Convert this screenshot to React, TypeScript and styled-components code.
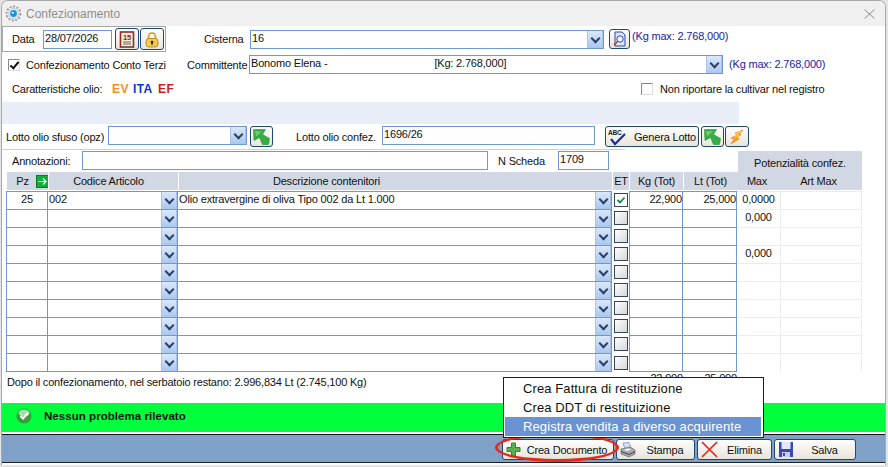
import React from "react";
import styled, { createGlobalStyle } from "styled-components";

const GlobalStyle = createGlobalStyle`
  html, body { margin: 0; padding: 0; background: #e4e4e4; }
  body { width: 888px; height: 467px; overflow: hidden; font-family: "Liberation Sans", Arial, sans-serif; font-size: 11px; letter-spacing: -0.18px; color: #111; }
`;

const rows = [
  { pz: "25", code: "002", desc: "Olio extravergine di oliva Tipo 002 da Lt 1.000", et: true, kg: "22,900", lt: "25,000", max: "0,0000" },
  { max: "0,000" },
  {},
  { max: "0,000" },
  {},
  {},
  {},
  {},
  {},
  {},
] as { pz?: string; code?: string; desc?: string; et?: boolean; kg?: string; lt?: string; max?: string }[];

const COLS = "42px 130px 434px 17px 54px 54px 44px 81px";

export default function App() {
  return (
    <>
      <GlobalStyle />
      <Window>
        <TitleBar>
          <GearIcon />
          <Title>Confezionamento</Title>
          <CloseButton>
            <svg width="11" height="10" viewBox="0 0 11 10">
              <path d="M.5.5l10 9M10.500.5l-10 9" stroke="#8a8a8a" strokeWidth="1" fill="none" />
            </svg>
          </CloseButton>
        </TitleBar>
        <Body>
          <TopRow>
            <DateBox>
              <Label>Data</Label>
              <Input $w={69} $h={19}>28/07/2026</Input>
              <IconButton $w={24} $h={22}><CalendarIcon /></IconButton>
              <IconButton $w={24} $h={22}><LockIcon /></IconButton>
            </DateBox>
            <Label $ml={38} $w={46}>Cisterna</Label>
            <Combo $w={354} $h={19}>16</Combo>
            <IconButton $w={21} $h={20} $ml={5}><DocSearchIcon /></IconButton>
            <Note $ml={2} $up={6}>(Kg max: 2.768,000)</Note>
          </TopRow>
          <Row $h={21} $mt={2}>
            <CheckBox $ml={6} $checked />
            <Label $ml={6} $w={161}>Confezionamento Conto Terzi</Label>
            <Label $w={62}>Committente</Label>
            <Combo $w={474} $h={19}>
              Bonomo Elena -
              <Spacer />
              [Kg: 2.768,000]
            </Combo>
            <Note $ml={6} $up={2}>(Kg max: 2.768,000)</Note>
          </Row>
          <Row $h={18} $mt={5}>
            <Label $ml={10} $w={100}>Caratteristiche olio:</Label>
            <Tag $color="#ff8a1e" $w={21}>EV</Tag>
            <Tag $color="#0a34e0" $w={25}>ITA</Tag>
            <Tag $color="#c81e1e" $w={20}>EF</Tag>
            <CheckBox $ml={463} />
            <Label $ml={7}>Non riportare la cultivar nel registro</Label>
          </Row>
          <Band />
          <Row $h={21} $mt={2}>
            <Label $ml={4} $w={102}>Lotto olio sfuso (opz)</Label>
            <Combo $w={139} $h={19} $lift />
            <IconButton $w={23} $h={21} $ml={3}><GreenArrowIcon /></IconButton>
            <Label $ml={23} $w={86}>Lotto olio confez.</Label>
            <Input $w={213} $h={19} $lift>1696/26</Input>
            <IconButton $w={94} $h={21} $ml={10}>
              <AbcIcon />
              <ButtonText $pl={6}>Genera Lotto</ButtonText>
            </IconButton>
            <IconButton $w={23} $h={21} $ml={2}><GreenArrowIcon /></IconButton>
            <IconButton $w={24} $h={21} $ml={1}><BoltIcon /></IconButton>
          </Row>
          <Divider />
          <Row $h={19} $mt={1}>
            <Label $ml={10} $w={70}>Annotazioni:</Label>
            <Input $w={406} $h={19} />
            <Label $ml={10} $w={60}>N Scheda</Label>
            <Input $w={51} $h={19}>1709</Input>
            <PotentialHead>Potenzialità confez.</PotentialHead>
          </Row>
          <Grid>
            <Head $pl={10}>
              Pz
              <ArrowBadge>
                <svg width="11" height="11" viewBox="0 0 11 11">
                  <path d="M1.500 5.500h7.500M6 2.500l3 3-3 3" stroke="#fff" strokeWidth="1.200" fill="none" />
                </svg>
              </ArrowBadge>
            </Head>
            <Head $pr={10}>Codice Articolo</Head>
            <Head $pr={138}>Descrizione contenitori</Head>
            <Head>ET</Head>
            <Head>Kg (Tot)</Head>
            <Head>Lt (Tot)</Head>
            <Head $joined $pr={4}>Max</Head>
            <Head $joined $pr={6}>Art Max</Head>
            {rows.map((r, i) => {
              const last = i === rows.length - 1;
              return (
                <React.Fragment key={i}>
                  <Cell $align="center" $first $last={last}>{r.pz}</Cell>
                  <Cell $pad $last={last}>
                    {r.code}
                    <DropButton />
                  </Cell>
                  <Cell $pad $last={last}>
                    {r.desc}
                    <DropButton />
                  </Cell>
                  <EtCell>
                    <SmallCheck $checked={r.et}>
                      {r.et && (
                        <svg width="10" height="10" viewBox="0 0 10 10">
                          <path d="M1.500 5l2.500 2.500L8.500 2.500" stroke="#0b8a3a" strokeWidth="1.800" fill="none" />
                        </svg>
                      )}
                    </SmallCheck>
                  </EtCell>
                  <Cell $align="right" $first $last={last}>{r.kg}</Cell>
                  <Cell $align="right" $last={last}>{r.lt}</Cell>
                  <SideCell>{r.max}</SideCell>
                  <SideCell />
                </React.Fragment>
              );
            })}
          </Grid>
          <Totals>
            <span />
            <span />
            <span />
            <span />
            <TotalValue>22,900</TotalValue>
            <TotalValue>25,000</TotalValue>
          </Totals>
          <Remaining>Dopo il confezionamento, nel serbatoio restano: 2.996,834 Lt (2.745,100 Kg)</Remaining>
          <StatusBar>
            <OkIcon />
            <StatusText>Nessun problema rilevato</StatusText>
          </StatusBar>
        </Body>
        <Footer>
          <FootButton $w={112}>
            <PlusIcon />
            <FootLabel>Crea Documento</FootLabel>
          </FootButton>
          <FootButton $w={79}>
            <PrinterIcon />
            <FootLabel>Stampa</FootLabel>
          </FootButton>
          <FootButton $w={75}>
            <CrossIcon />
            <FootLabel>Elimina</FootLabel>
          </FootButton>
          <FootButton $w={82}>
            <SaveIcon />
            <FootLabel>Salva</FootLabel>
          </FootButton>
          <RedRing />
          <Menu>
            <MenuItem>Crea Fattura di restituzione</MenuItem>
            <MenuItem>Crea DDT di restituizione</MenuItem>
            <MenuItem $active>Registra vendita a diverso acquirente</MenuItem>
          </Menu>
        </Footer>
      </Window>
    </>
  );
}

function Combo({ $w, $h, $lift, children }: { $w: number; $h: number; $lift?: boolean; children?: React.ReactNode }) {
  return (
    <ComboBox $w={$w} $h={$h} $lift={$lift}>
      <ComboText>{children}</ComboText>
      <DropButton />
    </ComboBox>
  );
}

function GearIcon() {
  return (
    <svg width="17" height="17" viewBox="0 0 17 17">
      <circle cx="8.500" cy="8.500" r="7" fill="none" stroke="#9a9a9a" strokeWidth="1.800" strokeDasharray="2 1.600" />
      <circle cx="8.500" cy="8.500" r="5" fill="#eef2f6" stroke="#a8a8a8" strokeWidth=".6" />
      <circle cx="8.500" cy="8.500" r="3.400" fill="#1590e8" />
      <circle cx="7.800" cy="7.800" r="1.200" fill="#bfe6ff" />
    </svg>
  );
}

function CalendarIcon() {
  return (
    <svg width="16" height="17" viewBox="0 0 16 17">
      <rect x="1.500" y="1" width="13" height="15" fill="#f2ecd8" stroke="#8c2c2c" strokeWidth="1.600" />
      <path d="M4 11h8M4 13h8" stroke="#666" />
      <text x="8" y="9" fontSize="7.500" fontWeight="700" textAnchor="middle" fill="#a01818" fontFamily="Liberation Sans">15</text>
    </svg>
  );
}

function LockIcon() {
  return (
    <svg width="16" height="17" viewBox="0 0 16 17">
      <path d="M4.500 8V5.500a3.500 3.500 0 017 0V8" fill="none" stroke="#c89a30" strokeWidth="1.600" />
      <rect x="2" y="7.500" width="12" height="8.500" rx="3" fill="#f5c94e" stroke="#c28f22" />
      <circle cx="8" cy="11" r="1.300" fill="#222" />
      <path d="M8 11v3" stroke="#222" strokeWidth="1.200" />
    </svg>
  );
}

function DocSearchIcon() {
  return (
    <svg width="16" height="16" viewBox="0 0 16 16">
      <path d="M3 1h7l3 3v11H3z" fill="#dfe8fb" stroke="#2e46b0" />
      <circle cx="8" cy="8" r="3.200" fill="#f4f8ff" stroke="#2e46b0" />
      <path d="M5.500 10.500L2 14" stroke="#b8401c" strokeWidth="1.600" />
    </svg>
  );
}

function GreenArrowIcon() {
  return (
    <svg width="17" height="16" viewBox="0 0 17 16">
      <path d="M.5.5h12L9.500 5.500l7 4-1 6h-6L6.500 8.500l-5.500 3z" fill="#35ad45" stroke="#2a8f3a" strokeWidth=".6" />
      <path d="M2 2l7 .5-6 5z" fill="#6fd070" />
    </svg>
  );
}

function AbcIcon() {
  return (
    <svg width="20" height="18" viewBox="0 0 20 18">
      <text x="0" y="7" fontSize="6.500" fontWeight="700" fill="#222" fontFamily="Liberation Sans">ABC</text>
      <path d="M3 11l4 5L17 6" stroke="#1f2f9a" strokeWidth="2.200" fill="none" />
    </svg>
  );
}

function BoltIcon() {
  return (
    <svg width="16" height="16" viewBox="0 0 16 16">
      <path d="M14 1L6 4 8 6 2 9l3 1-3 5 8-5-2-2 4-2-1-2z" fill="#f8a020" stroke="#e87818" strokeWidth=".5" />
      <path d="M12 2.500L7.500 4.500 9.500 6 6 8" stroke="#ffe860" fill="none" />
    </svg>
  );
}

function OkIcon() {
  return (
    <svg width="16" height="16" viewBox="0 0 16 16">
      <circle cx="8" cy="8" r="7.500" fill="#3a9a3e" />
      <ellipse cx="8" cy="5" rx="5.500" ry="3.500" fill="#a8dca8" />
      <path d="M4.500 8l2.500 2.500L12 5" stroke="#fff" strokeWidth="2" fill="none" />
    </svg>
  );
}

function PlusIcon() {
  return (
    <svg width="15" height="15" viewBox="0 0 15 15">
      <path d="M5.500 1h4v4.500H14v4H9.500V14h-4V9.500H1v-4h4.500z" fill="#58b050" stroke="#2e8438" />
    </svg>
  );
}

function PrinterIcon() {
  return (
    <svg width="16" height="16" viewBox="0 0 16 16">
      <path d="M3 1l6-.5 2 5-6 1.500z" fill="#cfe0f4" stroke="#7a8ea8" strokeWidth=".7" />
      <path d="M1 7l9-2 5 3v4l-6 3-8-3z" fill="#a8acb2" stroke="#666" strokeWidth=".7" />
      <path d="M1 9.500l8 3 6-3" stroke="#3c3c3c" fill="none" />
      <path d="M4 7.500l5-1 2 1.500-5 1z" fill="#f2f2f2" />
    </svg>
  );
}

function CrossIcon() {
  return (
    <svg width="17" height="17" viewBox="0 0 17 17">
      <path d="M1 1l15 15M16 1L1 16" stroke="#e8281c" strokeWidth="1.700" fill="none" />
    </svg>
  );
}

function SaveIcon() {
  return (
    <svg width="16" height="17" viewBox="0 0 16 17">
      <path d="M1 1h14v15H1z" fill="#3c48b4" />
      <rect x="3.500" y="1" width="9" height="7" fill="#e4e8f4" />
      <rect x="4" y="11" width="8" height="5" fill="#c8cede" />
      <rect x="5" y="12" width="2" height="3" fill="#3c48b4" />
    </svg>
  );
}

const Window = styled.div`
  position: relative;
  width: 885px;
  height: 465px;
  margin-left: 1px;
  display: flex;
  flex-direction: column;
  background: #fff;
  border: 1px solid #a8a8a8;
  border-bottom: 0;
  border-radius: 7px 7px 0 0;
  box-sizing: border-box;
  overflow: hidden;
`;

const TitleBar = styled.div`
  flex: none;
  height: 25px;
  display: flex;
  align-items: center;
  padding: 0 10px 0 3px;
  gap: 4px;
  background: #f0f0f0;
`;

const Title = styled.div`
  flex: 1;
  color: #8d8d8d;
  font-size: 12px;
  letter-spacing: 0;
`;

const CloseButton = styled.div`
  display: flex;
  line-height: 0;
`;

const Body = styled.div`
  flex: 1;
  display: flex;
  flex-direction: column;
`;

const Row = styled.div<{ $h: number; $mt?: number }>`
  flex: none;
  display: flex;
  align-items: center;
  height: ${(p) => p.$h}px;
  margin-top: ${(p) => p.$mt ?? 0}px;
`;

const TopRow = styled.div`
  flex: none;
  display: flex;
  align-items: center;
  height: 26px;
`;

const DateBox = styled.div`
  width: 164px;
  height: 26px;
  box-sizing: border-box;
  display: flex;
  align-items: center;
  border: 1px solid #a8a8a8;
  padding-left: 9px;
  & > span { width: 31px; }
  & > div + button { margin-left: 3px; }
  & > button + button { margin-left: 1px; }
`;

const Label = styled.span<{ $ml?: number; $w?: number }>`
  flex: none;
  margin-left: ${(p) => p.$ml ?? 0}px;
  ${(p) => (p.$w ? `width: ${p.$w}px;` : "")}
  white-space: nowrap;
`;

const Input = styled.div<{ $w: number; $h: number; $lift?: boolean }>`
  flex: none;
  box-sizing: border-box;
  width: ${(p) => p.$w}px;
  height: ${(p) => p.$h}px;
  margin-top: ${(p) => (p.$lift ? "-2px" : "0")};
  line-height: 15px;
  padding-left: 1px;
  border: 1px solid #6f97d6;
  background: #fff;
`;

const ComboBox = styled(Input)`
  display: flex;
  padding: 0;
  overflow: hidden;
`;

const ComboText = styled.div`
  flex: 1;
  padding-left: 1px;
  white-space: nowrap;
`;

const Spacer = styled.span`
  display: inline-block;
  width: 107px;
`;

const DropButton = styled.i`
  flex: none;
  position: relative;
  display: block;
  width: 16px;
  align-self: stretch;
  margin-left: auto;
  border: 1px solid #a8c4ec;
  border-width: 0 1px;
  box-sizing: border-box;
  background: linear-gradient(#dbe8f9, #a9c8f0);
  &::after {
    content: "";
    position: absolute;
    left: 4px;
    top: 4px;
    width: 5px;
    height: 5px;
    border: solid #2c3f66;
    border-width: 0 2px 2px 0;
    transform: rotate(45deg);
  }
`;

const IconButton = styled.button<{ $w: number; $h: number; $ml?: number }>`
  flex: none;
  display: flex;
  align-items: center;
  justify-content: center;
  box-sizing: border-box;
  width: ${(p) => p.$w}px;
  height: ${(p) => p.$h}px;
  margin-left: ${(p) => p.$ml ?? 0}px;
  padding: 0;
  border: 1px solid #1d4a72;
  border-radius: 3px;
  background: linear-gradient(#fdfdfb, #e8e5da);
  font: inherit;
  letter-spacing: inherit;
  color: inherit;
`;

const ButtonText = styled.span<{ $pl: number }>`
  padding-left: ${(p) => p.$pl}px;
  white-space: nowrap;
`;

const Note = styled.span<{ $ml: number; $up: number }>`
  flex: none;
  margin-left: ${(p) => p.$ml}px;
  margin-top: -${(p) => p.$up}px;
  color: #1a1aa8;
  white-space: nowrap;
`;

const CheckBox = styled.span<{ $ml: number; $checked?: boolean }>`
  flex: none;
  box-sizing: border-box;
  position: relative;
  width: 12px;
  height: 12px;
  margin-left: ${(p) => p.$ml}px;
  border: 1px solid #8a8a8a;
  border-right-color: #dcdcdc;
  border-bottom-color: #dcdcdc;
  background: #fff;
  ${(p) =>
    p.$checked
      ? `&::after {
    content: "";
    position: absolute;
    left: 3px;
    top: 0;
    width: 3px;
    height: 7px;
    border: solid #111;
    border-width: 0 2px 2px 0;
    transform: rotate(40deg);
  }`
      : ""}
`;

const Tag = styled.span<{ $color: string; $w: number }>`
  flex: none;
  width: ${(p) => p.$w}px;
  color: ${(p) => p.$color};
  font-weight: 700;
  font-size: 12px;
  letter-spacing: 0.4px;
`;

const Band = styled.div`
  flex: none;
  width: 737px;
  height: 22px;
  margin-top: 4px;
  background: #e9edf8;
`;

const Divider = styled.div`
  flex: none;
  width: 623px;
  height: 1px;
  margin-top: 2px;
  background: #cfcfcf;
`;

const PotentialHead = styled.div`
  flex: none;
  width: 124px;
  height: 21px;
  margin-left: 129px;
  align-self: flex-start;
  padding-top: 6px;
  box-sizing: border-box;
  text-align: center;
  background: #d1d8e4;
`;

const Grid = styled.div`
  flex: none;
  display: grid;
  grid-template-columns: ${COLS};
  grid-template-rows: 19px repeat(9, 18px) 19px;
  width: 856px;
  margin: 2px 0 0 4px;
`;

const Head = styled.div<{ $joined?: boolean; $pl?: number; $pr?: number }>`
  display: flex;
  align-items: center;
  justify-content: center;
  gap: 7px;
  box-sizing: border-box;
  padding: 0 ${(p) => p.$pr ?? 0}px 0 ${(p) => p.$pl ?? 0}px;
  background: #d1d8e4;
  border-left: ${(p) => (p.$joined ? "0" : "1px solid #fff")};
  border-bottom: 1px solid #fff;
`;

const ArrowBadge = styled.span`
  display: flex;
  align-items: center;
  justify-content: center;
  width: 13px;
  height: 13px;
  background: #0fae3a;
  border: 1px solid #0a7a28;
  box-sizing: border-box;
`;

const Cell = styled.div<{ $align?: string; $pad?: boolean; $first?: boolean; $last?: boolean }>`
  display: flex;
  justify-content: ${(p) =>
    p.$align === "center" ? "center" : p.$align === "right" ? "flex-end" : "flex-start"};
  box-sizing: border-box;
  padding-left: ${(p) => (p.$pad ? "1px" : "0")};
  line-height: 15px;
  white-space: nowrap;
  border-top: 1px solid #6f97d6;
  border-right: 1px solid #6f97d6;
  border-left: ${(p) => (p.$first ? "1px solid #6f97d6" : "0")};
  border-bottom: ${(p) => (p.$last ? "1px solid #6f97d6" : "0")};
`;

const EtCell = styled.div`
  display: flex;
  align-items: center;
  justify-content: center;
`;

const SmallCheck = styled.span<{ $checked?: boolean }>`
  display: flex;
  align-items: center;
  justify-content: center;
  box-sizing: border-box;
  width: 14px;
  height: 14px;
  border: 1px solid #33485e;
  background: ${(p) => (p.$checked ? "#fff" : "linear-gradient(135deg, #fff, #d6d6d6)")};
`;

const SideCell = styled.div`
  box-sizing: border-box;
  line-height: 15px;
  text-align: center;
  border-top: 1px solid #ececec;
  border-right: 1px solid #ececec;
`;

const Totals = styled.div`
  flex: none;
  display: grid;
  grid-template-columns: ${COLS};
  width: 856px;
  height: 5px;
  margin: 0 0 0 4px;
`;

const TotalValue = styled.span`
  text-align: right;
  line-height: 13px;
`;

const Remaining = styled.div`
  flex: none;
  height: 26px;
  line-height: 11px;
  padding: 0 0 0 5px;
  white-space: nowrap;
`;

const StatusBar = styled.div`
  flex: none;
  display: flex;
  align-items: center;
  height: 29px;
  box-sizing: border-box;
  padding: 0 0 3px 14px;
  gap: 12px;
  background: #00ff3c;
`;

const StatusText = styled.span`
  font-weight: 700;
  font-size: 11.5px;
  letter-spacing: 0.05px;
`;

const Footer = styled.div`
  position: relative;
  flex: none;
  display: flex;
  align-items: center;
  gap: 2px;
  height: 29px;
  margin: 2px 0;
  padding: 2px 0 0 500px;
  box-sizing: border-box;
  background: #7fa1c7;
  border-top: 1px solid #111;
  border-bottom: 1px solid #222;
`;

const FootButton = styled.button<{ $w: number }>`
  flex: none;
  display: flex;
  align-items: center;
  box-sizing: border-box;
  width: ${(p) => p.$w}px;
  height: 21px;
  padding: 0 0 0 3px;
  border: 1px solid #1d4a72;
  border-radius: 3px;
  background: linear-gradient(#fdfdfb, #e8e5da);
  font: inherit;
  letter-spacing: inherit;
  color: #111;
`;

const FootLabel = styled.span`
  flex: 1;
  text-align: center;
  white-space: nowrap;
`;

const RedRing = styled.div`
  position: absolute;
  left: 493px;
  top: -2px;
  width: 124px;
  height: 29px;
  box-sizing: border-box;
  border: 3px solid #e8281c;
  border-radius: 50%;
  pointer-events: none;
`;

const Menu = styled.div`
  position: absolute;
  left: 501px;
  bottom: 24px;
  width: 261px;
  box-sizing: border-box;
  padding: 1px 2px 1px 1px;
  background: #fff;
  border: 1px solid #0e1c5c;
  z-index: 2;
`;

const MenuItem = styled.div<{ $active?: boolean }>`
  height: 19px;
  line-height: 20px;
  padding-left: 18px;
  font-size: 13px;
  letter-spacing: 0.1px;
  white-space: nowrap;
  overflow: hidden;
  color: ${(p) => (p.$active ? "#fff" : "#111")};
  background: ${(p) => (p.$active ? "#6a93d4" : "transparent")};
`;
